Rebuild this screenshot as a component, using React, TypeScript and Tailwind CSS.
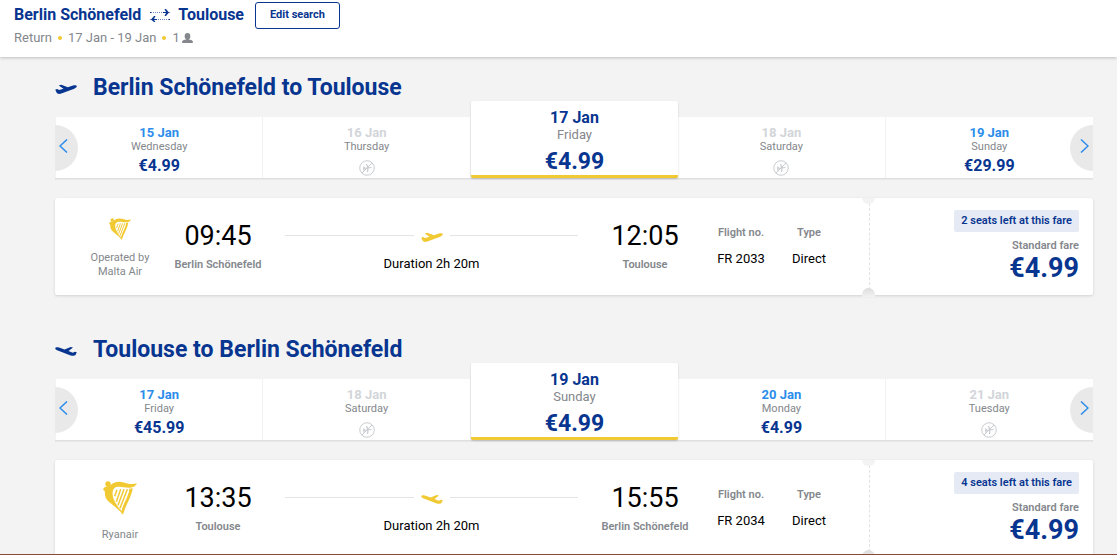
import React from "react";

type Day = { date: string; weekday: string; price?: string; selected?: boolean };
type Trip = {
  from: string;
  to: string;
  inbound?: boolean;
  days: Day[];
  airline: string[];
  depart: string;
  arrive: string;
  flight: string;
  seats: string;
};

const trips: Trip[] = [
  {
    from: "Berlin Schönefeld",
    to: "Toulouse",
    days: [
      { date: "15 Jan", weekday: "Wednesday", price: "€4.99" },
      { date: "16 Jan", weekday: "Thursday" },
      { date: "17 Jan", weekday: "Friday", price: "€4.99", selected: true },
      { date: "18 Jan", weekday: "Saturday" },
      { date: "19 Jan", weekday: "Sunday", price: "€29.99" },
    ],
    airline: ["Operated by", "Malta Air"],
    depart: "09:45",
    arrive: "12:05",
    flight: "FR 2033",
    seats: "2 seats left at this fare",
  },
  {
    from: "Toulouse",
    to: "Berlin Schönefeld",
    inbound: true,
    days: [
      { date: "17 Jan", weekday: "Friday", price: "€45.99" },
      { date: "18 Jan", weekday: "Saturday" },
      { date: "19 Jan", weekday: "Sunday", price: "€4.99", selected: true },
      { date: "20 Jan", weekday: "Monday", price: "€4.99" },
      { date: "21 Jan", weekday: "Tuesday" },
    ],
    airline: ["Ryanair"],
    depart: "13:35",
    arrive: "15:55",
    flight: "FR 2034",
    seats: "4 seats left at this fare",
  },
];

function Plane({ className, inbound }: { className: string; inbound?: boolean }) {
  return (
    <svg viewBox="0 0 44 22" className={className} fill="currentColor" aria-hidden="true">
      <path
        d={
          inbound
            ? "M0.5 3.8 C1.2 1.8 5 2.2 8 3.2 L19 7 L31.500 2 L36 3 L27 9.800 L35.500 13.500 L40 11.500 L43.500 12.500 L41 18 C39 20.400 34 19.600 30 18.400 L5.500 9 C2.500 7.800 0 5.800 0.500 3.800 Z"
            : "M0.5 11.5 L4 10 L8.500 12.2 L17 9.600 L7.500 3 L12.500 1.4 L25.500 6.400 L36 3 C39.500 2 43 2.200 43.500 4.200 C44 6.200 41.500 8.200 38.500 9.300 L14 18.600 C9.500 20.200 5 20.400 3.400 17.600 Z"
        }
      />
    </svg>
  );
}

function Harp({ className }: { className: string }) {
  return (
    <svg viewBox="0 0 102 102" className={className} fill="#f1c933" aria-hidden="true">
      <circle cx="15" cy="9" r="8" />
      <path d="M20 14 C32 1 50 0 65 5 C79 10 91 10 102 7 C98 16 90 21 77 20 C62 19 50 15 39 18 C31 21 28 30 29 42 C31 60 44 76 57 92 L59 102 C52 88 36 78 22 66 C10 56 4 46 6 32 L0 25 C4 18 9 16 15 16 Z" />
      <path d="M79 23 L89 22 C86 48 68 72 60 101 L55 91 C61 66 77 46 79 23 Z" />
      <path d="M42 26 L35 46 M53 25 L40 62 M63 25 L45 73 M73 25 L51 82" stroke="#f1c933" strokeWidth="4.500" fill="none" />
    </svg>
  );
}

function NoFlight() {
  return (
    <svg viewBox="0 0 32 32" className="mt-[7px] size-4" fill="none" stroke="#c9ccd0" strokeWidth="2" role="img" aria-label="No flights">
      <circle cx="16" cy="16" r="14.500" />
      <path d="M6 26 L26 6" />
      <path d="M8 17 L25 15 M18 16 L15 8 M18 16 L17 24 M11 17 L9 13 M11 17 L9 21" strokeWidth="2.500" />
    </svg>
  );
}

function Swap() {
  return (
    <svg viewBox="0 0 22 14" className="mr-[7px] ml-2 h-[14px] w-[22px]" fill="#073590" aria-hidden="true">
      <path d="M2 4.500 H15 M7 11.500 H20" stroke="#073590" strokeWidth="1" strokeDasharray="1 1" opacity=".6" />
      <path d="M14 4 L17 4 L15.500 1 L17 1 L19.500 4 L21.500 4.500 L19.500 5 L17 8 L15.500 8 L17 5 L14 5 Z" />
      <path d="M8 11 L5 11 L6.500 8 L5 8 L2.500 11 L0.500 11.500 L2.500 12 L5 14 L6.500 14 L5 12 L8 12 Z" />
      <path d="M1 4h1v1h-1z M20 11h1v1h-1z" />
    </svg>
  );
}

function DayTab({ day }: { day: Day }) {
  if (day.selected) {
    return (
      <button type="button" aria-pressed="true" className="relative z-10 flex h-[77px] flex-col items-center rounded-[2px] border-b-[3px] border-[#f1c933] bg-white pt-2 shadow-[0_1px_2px_rgba(0,0,0,0.18)]">
        <span className="text-base leading-[18px] font-bold text-[#073590]">{day.date}</span>
        <span className="text-[13px] leading-4 text-[#84878c]">{day.weekday}</span>
        <span className="mt-[7px] text-[23px] leading-6 font-bold text-[#073590]">{day.price}</span>
      </button>
    );
  }
  return (
    <button type="button" className="flex h-[61px] flex-col items-center border-r border-[#f2f2f2] bg-white pt-2 last:border-r-0">
      <span className={day.price ? "text-[13px] leading-4 font-bold text-[#2b8ceb]" : "text-[13px] leading-4 font-bold text-[#d2d5d9]"}>{day.date}</span>
      <span className="text-[11px] leading-3 text-[#84878c]">{day.weekday}</span>
      {day.price ? <span className="mt-1 text-base leading-[18px] font-bold text-[#073590]">{day.price}</span> : <NoFlight />}
    </button>
  );
}

function Arrow({ next }: { next?: boolean }) {
  return (
    <button
      type="button"
      aria-label={next ? "Later dates" : "Earlier dates"}
      className={
        next
          ? "absolute right-0 bottom-[9px] z-10 flex h-[46px] w-[23px] items-center justify-center rounded-l-full bg-[#e9e9e9] pb-1 pl-[6px]"
          : "absolute bottom-[9px] left-0 z-10 flex h-[46px] w-[23px] items-center justify-center rounded-r-full bg-[#e9e9e9] pr-[6px] pb-1"
      }
    >
      <svg viewBox="0 0 9 14" className="h-[14px] w-[9px]" fill="none" stroke="#2b8ceb" strokeWidth="1.500" aria-hidden="true">
        <path d={next ? "M1 0.500 L8 7 L1 13.500" : "M8 0.500 L1 7 L8 13.500"} />
      </svg>
    </button>
  );
}

function Stop({ time, place }: { time: string; place: string }) {
  return (
    <div className="flex w-[116px] shrink-0 flex-col items-center pt-[22px]">
      <span className="text-[27px] leading-8 text-black">{time}</span>
      <span className="mt-[5px] text-[11px] leading-4 font-semibold text-[#84878c]">{place}</span>
    </div>
  );
}

function Fact({ label, value, className }: { label: string; value: string; className: string }) {
  return (
    <div className={className}>
      <dt className="text-[11px] leading-4 font-semibold text-[#84878c]">{label}</dt>
      <dd className="mt-[10px] text-[13px] leading-4 text-black">{value}</dd>
    </div>
  );
}

function TripSection({ trip }: { trip: Trip }) {
  return (
    <section>
      <h2 className="flex items-center text-[23px] leading-[26px] font-bold text-[#073590]">
        <Plane inbound={trip.inbound} className="mt-[3px] mr-4 h-[11px] w-[22px]" />
        {trip.from} to {trip.to}
      </h2>
      <div className="relative">
        <div className="grid grid-cols-5 items-end pl-px">
          {trip.days.map((d) => (
            <DayTab key={d.date} day={d} />
          ))}
        </div>
        <div className="h-[2px] bg-linear-to-b from-[#dcdcdc] to-[#ececec]" />
        <Arrow />
        <Arrow next />
      </div>
      <article className="mt-[18px] flex h-[97px] rounded-[2px] bg-white shadow-[0_1px_3px_rgba(0,0,0,0.14)]">
        <div className="flex min-w-0 flex-1 pl-[25px]">
          <div className="flex w-20 shrink-0 flex-col items-center text-center text-[11px] leading-[14px] text-[#84878c]">
            {trip.inbound ? <Harp className="mt-[21px] mb-[13px] size-[34px]" /> : <Harp className="mt-5 mb-[11px] size-[22px]" />}
            {trip.airline.map((line) => (
              <span key={line}>{line}</span>
            ))}
          </div>
          <Stop time={trip.depart} place={trip.from} />
          <div className="flex min-w-0 flex-1 flex-col items-center px-[9px] pt-[30px]">
            <div className="flex w-full items-center">
              <span className="h-px flex-1 bg-[#e4e4e4]" />
              <Plane inbound={trip.inbound} className="mx-[7px] mt-1 h-[11px] w-[22px] text-[#f1c933]" />
              <span className="h-px flex-1 bg-[#e4e4e4]" />
            </div>
            <span className="mt-[13px] text-[13px] leading-4 text-black">Duration 2h 20m</span>
          </div>
          <Stop time={trip.arrive} place={trip.to} />
          <dl className="flex shrink-0 pt-[27px] pr-[30px] text-center">
            <Fact label="Flight no." value={trip.flight} className="w-[76px]" />
            <Fact label="Type" value="Direct" className="w-[60px]" />
          </dl>
        </div>
        <div className="relative flex w-56 shrink-0 flex-col items-end border-l border-dashed border-[#e2e2e2] pt-3 pr-[14px] text-[11px] font-semibold">
          <span className="absolute top-0 -left-2 h-[6px] w-[13px] rounded-b-full bg-[#f3f3f3]" />
          <span className="absolute -bottom-[2px] -left-2 h-[9px] w-[13px] rounded-t-full bg-linear-to-b from-[#dcdcdc] to-[#f3f3f3]" />
          <span className="rounded-[2px] bg-[#e6eaf4] px-[7px] leading-[22px] text-[#073590]">{trip.seats}</span>
          <span className="mt-[6px] leading-4 text-[#84878c]">Standard fare</span>
          <span className="text-[27px] leading-7 font-bold text-[#073590]">€4.99</span>
        </div>
      </article>
    </section>
  );
}

export default function App() {
  return (
    <div className="flex h-screen flex-col overflow-hidden border-b border-[#8a4a3a] bg-[#f3f3f3] font-[Roboto,sans-serif]">
      <header className="h-[57px] shrink-0 bg-white px-[14px] shadow-[0_1px_3px_rgba(0,0,0,0.22)]">
        <div className="flex items-center pt-px">
          <h1 className="flex items-center text-base leading-7 font-bold text-[#073590]">
            Berlin Schönefeld
            <Swap />
            Toulouse
          </h1>
          <button type="button" className="ml-[11px] h-[27px] rounded-[3px] border border-[#073590] px-[14px] text-[11px] font-bold text-[#073590]">
            Edit search
          </button>
        </div>
        <div className="flex items-center text-[13px] leading-[18px] text-[#84878c]">
          <span>Return</span>
          <span className="mx-[6px] size-1 rounded-full bg-[#f1c933]" />
          <span>17 Jan - 19 Jan</span>
          <span className="mx-[6px] size-1 rounded-full bg-[#f1c933]" />
          <span>1</span>
          <svg viewBox="0 0 11 10" className="ml-[2px] h-[10px] w-[11px]" fill="currentColor" role="img" aria-label="passenger">
            <ellipse cx="5.500" cy="3.300" rx="2.800" ry="3.300" />
            <path d="M4.200 5.500 h2.600 v1 C9 6.800 11 7.500 11 9 C11 9.700 10.500 10 9.800 10 H1.200 C0.500 10 0 9.700 0 9 C0 7.500 2 6.800 4.200 6.500 Z" />
          </svg>
        </div>
      </header>
      <main className="flex flex-col gap-[42px] pt-[18px] pr-6 pl-[55px]">
        {trips.map((t) => (
          <TripSection key={t.flight} trip={t} />
        ))}
      </main>
    </div>
  );
}
